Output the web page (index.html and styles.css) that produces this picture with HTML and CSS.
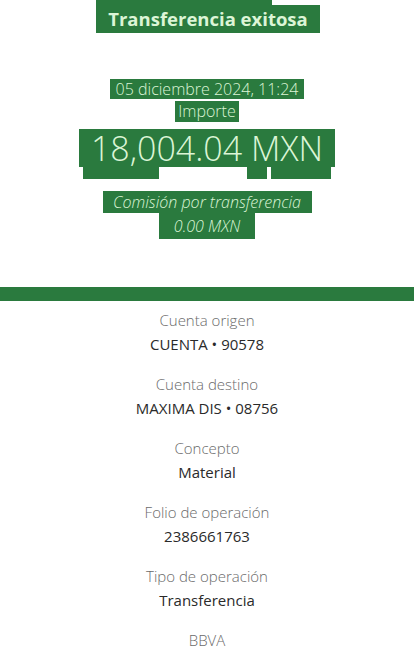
FILE: index.html
```html
<!DOCTYPE html>
<html lang="es">
<head>
<meta charset="utf-8">
<title>Transferencia exitosa</title>
<link rel="stylesheet" href="styles.css">
</head>
<body>
<div class="hero">
  <div class="title-wrap"><span class="title-cap"></span><span class="hl title">Transferencia exitosa</span></div>
  <div class="meta">
    <span class="hl date">05 diciembre 2024, 11:24</span>
    <span class="hl label">Importe</span>
    <span class="hl amount">18,004.04 MXN</span>
    <div class="amount-tail"><span class="t1"></span><span class="t2"></span><span class="t3"></span></div>
  </div>
  <div class="fee">
    <span class="hl fee-label">Comisión por transferencia</span>
    <span class="hl fee-value">0.00 MXN</span>
  </div>
</div>
<div class="bar"></div>
<div class="details">
  <div class="item"><div class="k">Cuenta origen</div><div class="v">CUENTA • 90578</div></div>
  <div class="item"><div class="k">Cuenta destino</div><div class="v">MAXIMA DIS • 08756</div></div>
  <div class="item"><div class="k">Concepto</div><div class="v">Material</div></div>
  <div class="item"><div class="k">Folio de operación</div><div class="v">2386661763</div></div>
  <div class="item"><div class="k">Tipo de operación</div><div class="v">Transferencia</div></div>
  <div class="item"><div class="k">BBVA</div></div>
</div>
</body>
</html>
```
FILE: styles.css
```css
* { box-sizing: border-box; }
html, body { margin: 0; padding: 0; background: #ffffff; }
body {
  width: 414px;
  height: 661px;
  overflow: hidden;
  font-family: "Open Sans", "Liberation Sans", sans-serif;
  color: #121212;
}
.hero {
  display: flex;
  flex-direction: column;
  align-items: center;
  height: 287px;
}
.hl {
  background: #2a7a3e;
  color: #dcf5d6;
  display: inline-block;
}
.title-wrap {
  display: flex;
  flex-direction: column;
  align-items: flex-start;
  width: 224px;
  margin-left: 2px;
}
.title-cap {
  display: block;
  width: 176px;
  height: 5px;
  background: #2a7a3e;
}
.title {
  font-weight: 700;
  font-size: 18.5px;
  line-height: 28px;
  width: 224px;
  text-align: center;
}
.meta {
  margin-top: 46px;
  display: flex;
  flex-direction: column;
  align-items: center;
}
.date {
  font-weight: 300;
  font-size: 16px;
  line-height: 20px;
  width: 194px;
  text-align: center;
}
.label {
  font-weight: 300;
  font-size: 16px;
  line-height: 21px;
  margin-top: 2px;
  width: 64px;
  text-align: center;
}
.amount {
  font-weight: 300;
  font-size: 34px;
  line-height: 38px;
  margin-top: 7px;
  width: 256px;
  text-align: center;
}
.amount-tail {
  display: flex;
  width: 256px;
  height: 12px;
  padding: 0 4px;
}
.amount-tail span { background: #2a7a3e; display: block; height: 12px; }
.amount-tail .t1 { width: 76px; }
.amount-tail .t2 { width: 20px; margin-left: 88px; }
.amount-tail .t3 { width: 60px; margin-left: auto; }
.fee {
  margin-top: 12px;
  display: flex;
  flex-direction: column;
  align-items: center;
}
.fee-label {
  font-style: italic;
  font-weight: 300;
  font-size: 16px;
  line-height: 22px;
  width: 209px;
  text-align: center;
}
.fee-value {
  font-style: italic;
  font-weight: 300;
  font-size: 16px;
  line-height: 26px;
  width: 96px;
  text-align: center;
}
.bar {
  height: 14px;
  background: #2a7a3e;
}
.details {
  display: flex;
  flex-direction: column;
  align-items: center;
  padding-top: 8px;
  gap: 17px;
}
.item {
  display: flex;
  flex-direction: column;
  align-items: center;
  gap: 1px;
}
.k {
  font-weight: 300;
  font-size: 15px;
  line-height: 22px;
  color: #6a6a6a;
}
.v {
  font-weight: 400;
  font-size: 15px;
  line-height: 24px;
  color: #2a2a2a;
}
```
